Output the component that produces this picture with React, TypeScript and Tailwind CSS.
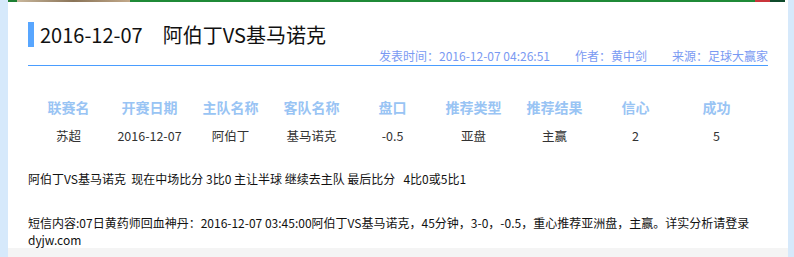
import React from 'react';

const cols = ['联赛名', '开赛日期', '主队名称', '客队名称', '盘口', '推荐类型', '推荐结果', '信心', '成功'];
const row = ['苏超', '2016-12-07', '阿伯丁', '基马诺克', '-0.5', '亚盘', '主赢', '2', '5'];

const App: React.FC = () => {
  return (
    <div
      className="w-[794px] h-[257px] overflow-hidden flex bg-[#d6e9fb]"
      style={{ fontFamily: '"Noto Sans CJK SC", "Noto Sans", sans-serif' }}
    >
      <div className="ml-[8px] w-[780px] bg-white flex flex-col">
        {/* top banner strip */}
        <div className="h-[2px] flex shrink-0">
          <div className="w-[9px] bg-[#1d7f33]"></div>
          <div className="w-[113px] bg-gradient-to-r from-[#c9b79c] via-[#8a7458] to-[#c2a98a]"></div>
          <div className="flex-1 bg-[#1f8a37]"></div>
          <div className="w-[15px] bg-[#c9353b]"></div>
          <div className="w-[15px] bg-[#0f4a2b]"></div>
          <div className="w-[3px] bg-white"></div>
        </div>

        <div className="px-[20px] flex-1 flex flex-col">
          {/* Title */}
          <div className="border-b border-solid border-b-[#4a9dff]">
            <div className="flex items-center mt-[20px] h-[25px]">
              <span className="w-[6px] h-[25px] bg-[#58a6ff]"></span>
              <h1 className="ml-[6px] text-[20px] leading-[25px] text-[#111] flex">
                <span>2016-12-07</span>
                <span className="ml-[20px]">阿伯丁VS基马诺克</span>
              </h1>
            </div>
            <div className="flex justify-end gap-[25px] text-[12px] leading-[16px] text-[#7a9af2] mt-[1px] pb-[1px]">
              <span>发表时间：2016-12-07 04:26:51</span>
              <span>作者：黄中剑</span>
              <span>来源：足球大赢家</span>
            </div>
          </div>

          {/* Table */}
          <div className="w-[729px] grid grid-cols-9 mt-[31px] text-center">
            {cols.map((c) => (
              <div key={c} className="text-[14px] leading-[20px] font-bold text-[#99c4f4]">
                {c}
              </div>
            ))}
            {row.map((v, i) => (
              <div key={i} className="text-[12.5px] leading-[20px] text-[#333] mt-[9px]">
                {v}
              </div>
            ))}
          </div>

          <p className="mt-[25px] text-[12px] leading-[16px] text-[#111] whitespace-pre">
            阿伯丁VS基马诺克  现在中场比分 3比0 主让半球 继续去主队 最后比分   4比0或5比1
          </p>

          <p className="mt-[27px] text-[12px] leading-[17px] text-[#111]">
            短信内容:07日黄药师回血神丹：2016-12-07 03:45:00阿伯丁VS基马诺克，45分钟，3-0，-0.5，重心推荐亚洲盘，主赢。详实分析请登录
            <br />
            dyjw.com
          </p>
        </div>
        <div className="h-[10px] bg-[#f4f4f4] shrink-0"></div>
      </div>
    </div>
  );
};

export default App;
